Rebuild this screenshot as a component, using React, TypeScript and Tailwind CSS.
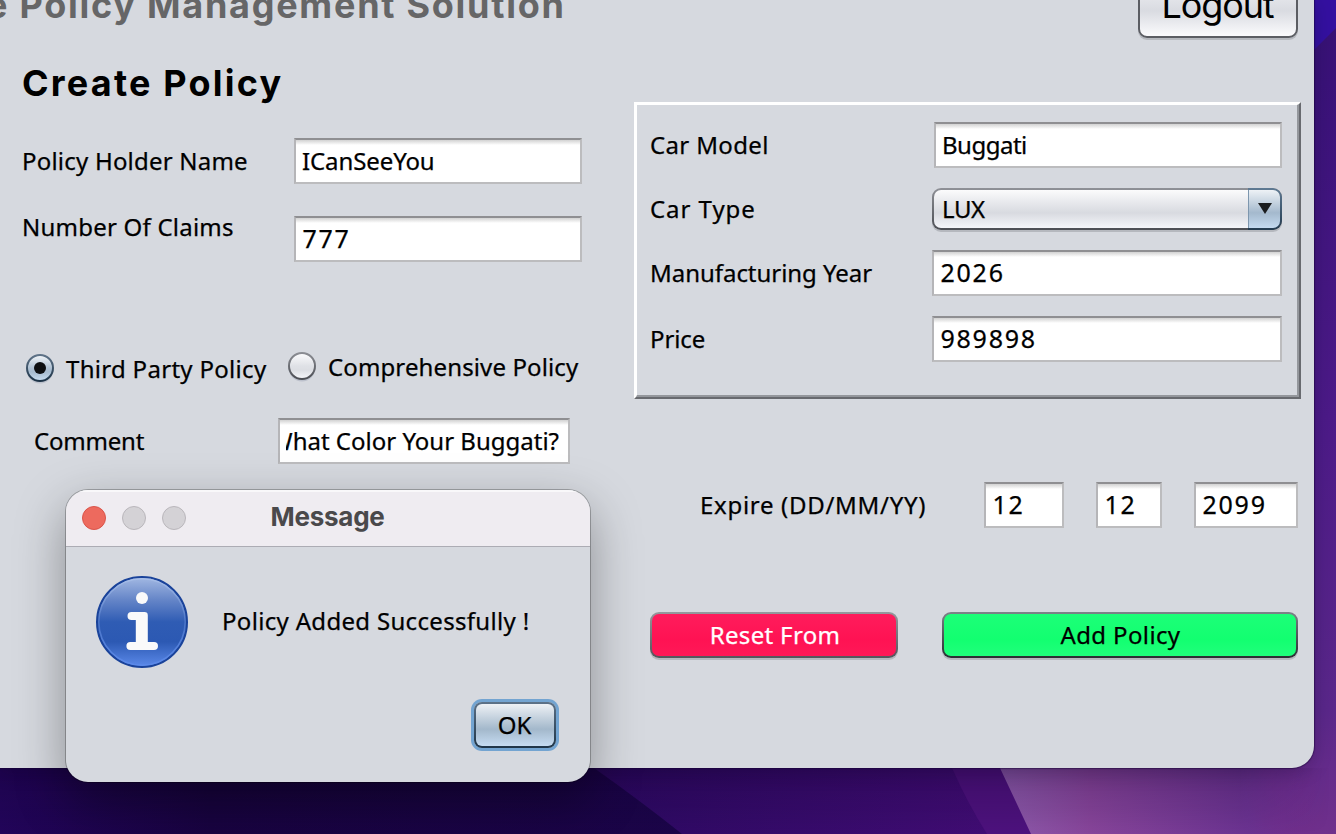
import type { ReactNode } from "react";

function Field({ className = "", children }: { className?: string; children: ReactNode }) {
  return (
    <div
      className={`flex h-[46px] shrink-0 items-center overflow-hidden border-2 border-t-[#8f8f92] border-r-[#bcbcbe] border-b-[#bcbcbe] border-l-[#b5b5b8] bg-white bg-linear-to-b from-[#d2d2d2] from-0% via-white via-[5px] to-white whitespace-nowrap ${className}`}
    >
      {children}
    </div>
  );
}

function NumberField({ className = "", children }: { className?: string; children: ReactNode }) {
  return <Field className={`pb-[2px] pl-[6.5px] text-[25px] tracking-[1.75px] ${className}`}>{children}</Field>;
}

function Radio({ id, checked = false }: { id: string; checked?: boolean }) {
  return (
    <svg width="28" height="32" viewBox="0 0 28 32" className="shrink-0">
      <defs>
        <linearGradient id={`${id}-fill`} x1="0" y1="0" x2="0" y2="1">
          <stop offset="0" stopColor={checked ? "#f4f7fa" : "#fdfdfe"} />
          <stop offset="0.5" stopColor={checked ? "#b0c2d4" : "#dfe1e6"} />
          <stop offset="0.65" stopColor={checked ? "#a6bbcf" : "#dcdee3"} />
          <stop offset="1" stopColor={checked ? "#c9dff3" : "#f7f8fb"} />
        </linearGradient>
        <linearGradient id={`${id}-line`} x1="0" y1="0" x2="0" y2="1">
          <stop offset="0" stopColor={checked ? "#5f7388" : "#8b8d93"} />
          <stop offset="1" stopColor={checked ? "#1c3347" : "#4d4f55"} />
        </linearGradient>
      </defs>
      <circle cx="14" cy="16" r="13.4" fill="#bcc1cc" />
      <circle cx="14" cy="14" r="13" fill={`url(#${id}-fill)`} stroke={`url(#${id}-line)`} strokeWidth="2" />
      {checked && <circle cx="14" cy="14" r="6" fill="#0d0f12" />}
    </svg>
  );
}

function InfoIcon() {
  return (
    <svg width="92" height="92" viewBox="0 0 92 92" className="shrink-0">
      <defs>
        <linearGradient id="info-fill" x1="0" y1="0" x2="0" y2="1">
          <stop offset="0" stopColor="#a3b9e3" />
          <stop offset="0.25" stopColor="#6686c8" />
          <stop offset="0.5" stopColor="#2f5cb4" />
          <stop offset="0.72" stopColor="#2c59b3" />
          <stop offset="1" stopColor="#5c8aea" />
        </linearGradient>
        <linearGradient id="info-rim" x1="0" y1="0" x2="0" y2="1">
          <stop offset="0" stopColor="#a9bfe8" />
          <stop offset="0.5" stopColor="#4a74c6" />
          <stop offset="1" stopColor="#5c8aea" />
        </linearGradient>
      </defs>
      <circle cx="46" cy="46" r="45" fill="url(#info-fill)" stroke="#1a439a" strokeWidth="2" />
      <circle cx="46" cy="46" r="43.2" fill="none" stroke="url(#info-rim)" strokeWidth="1.6" />
      <circle cx="46" cy="22" r="6" fill="#fafafa" />
      <path
        d="M35.5 36h13a3.3 3.3 0 0 1 3.3 3.3V66H58a4 4 0 0 1 0 8H34.4a4 4 0 0 1 0-8h5.4V44h-4.3a4 4 0 0 1 0-8z"
        fill="#fafafa"
      />
    </svg>
  );
}

function Wallpaper() {
  return (
    <svg width="1336" height="834" viewBox="0 0 1336 834" className="absolute inset-0">
      <defs>
        <linearGradient id="wp-right" x1="0" y1="0" x2="0" y2="1">
          <stop offset="0" stopColor="#361273" />
          <stop offset="0.1" stopColor="#3a1279" />
          <stop offset="0.5" stopColor="#4c1a88" />
          <stop offset="0.85" stopColor="#5a278a" />
          <stop offset="1" stopColor="#70308c" />
        </linearGradient>
        <linearGradient id="wp-left" x1="0" y1="0" x2="1" y2="0">
          <stop offset="0" stopColor="#22055a" />
          <stop offset="0.3" stopColor="#190442" />
          <stop offset="1" stopColor="#1b0549" />
        </linearGradient>
        <linearGradient id="wp-mid" x1="0" y1="0" x2="1" y2="0">
          <stop offset="0" stopColor="#2a0960" />
          <stop offset="1" stopColor="#430d76" />
        </linearGradient>
        <linearGradient id="wp-pink" x1="985" y1="0" x2="1336" y2="0" gradientUnits="userSpaceOnUse">
          <stop offset="0" stopColor="#8e5fae" />
          <stop offset="0.3" stopColor="#87459a" />
          <stop offset="0.75" stopColor="#6b3391" />
          <stop offset="0.95" stopColor="#702b8b" stopOpacity="0" />
        </linearGradient>
        <linearGradient id="wp-shade" x1="0" y1="768" x2="0" y2="834" gradientUnits="userSpaceOnUse">
          <stop offset="0" stopColor="#12002a" stopOpacity="0.25" />
          <stop offset="1" stopColor="#12002a" stopOpacity="0" />
        </linearGradient>
        <linearGradient id="wp-fade" x1="1240" y1="0" x2="1330" y2="0" gradientUnits="userSpaceOnUse">
          <stop offset="0" stopColor="white" />
          <stop offset="1" stopColor="black" />
        </linearGradient>
        <mask id="wp-shade-mask" maskUnits="userSpaceOnUse" x="0" y="768" width="1336" height="66">
          <rect y="768" width="1336" height="66" fill="url(#wp-fade)" />
        </mask>
      </defs>
      <rect width="1336" height="834" fill="url(#wp-right)" />
      <path d="M1300 0h36v28L1300 64z" fill="#3410a0" />
      <path d="M0 740h700v94H0z" fill="url(#wp-left)" />
      <path d="M560 740L594 768Q642 802 682 834H1040L990 740z" fill="url(#wp-mid)" />
      <path d="M942 740L952 768Q968 804 987 834H1040L990 740z" fill="#4d127d" />
      <path d="M985 740L1000 768L1031 834H1336V740z" fill="url(#wp-pink)" />
      <path d="M0 768h1336v66H0z" fill="url(#wp-shade)" mask="url(#wp-shade-mask)" />
    </svg>
  );
}

export default function App() {
  return (
    <div className="relative h-[834px] w-[1336px] overflow-hidden bg-[#22055a] font-['Noto_Sans','Liberation_Sans',sans-serif] text-[24px] leading-[32px] text-black [-webkit-text-stroke:0.25px_currentColor]">
      <Wallpaper />

      <main className="relative flex h-[768px] w-[1314px] flex-col overflow-hidden rounded-br-[22px] bg-[#d6d9df] shadow-[0_0_1px_1px_rgba(20,0,50,0.45),0_4px_18px_rgba(10,0,30,0.25)]">
        <header className="flex h-[40px] shrink-0 items-end justify-between pr-[16px]">
          <div className="ml-[-14px] flex h-[40px] items-end pb-[13px] font-['Inter',sans-serif] text-[36px] leading-[44px] font-bold tracking-[1.74px] whitespace-nowrap text-[#666667] [-webkit-text-stroke:0]">
            e Policy Management Solution
          </div>
          <button className="mb-[2px] flex h-[60px] w-[160px] shrink-0 items-end justify-center rounded-[9px] border-2 border-[#5b5d63] bg-linear-to-b from-[#f2f3f6] via-[#d9dbe1] via-55% to-[#fbfbfd] pr-px pb-[9px] font-['Inter',sans-serif] text-[36px] leading-[44px] tracking-[-1.1px] shadow-[0_2px_0_#b5b8be] [-webkit-text-stroke:0]">
            Logout
          </button>
        </header>

        <h1 className="flex h-[62px] shrink-0 items-center pt-[24px] pl-[22px] font-['Inter',sans-serif] text-[36px] leading-[44px] font-bold tracking-[2.2px] [-webkit-text-stroke:0]">
          Create Policy
        </h1>

        <div className="flex">
          <section className="flex w-[634px] shrink-0 flex-col pt-[36px] pl-[22px]">
            <div className="flex h-[46px] items-center">
              <label className="w-[272px] tracking-[0.21px]">Policy Holder Name</label>
              <Field className="w-[288px] pl-[6px] tracking-[-0.1px]">ICanSeeYou</Field>
            </div>
            <div className="mt-[32px] flex h-[46px] items-start">
              <label className="mt-[-5px] w-[272px] tracking-[0.22px]">Number Of Claims</label>
              <NumberField className="w-[288px]">777</NumberField>
            </div>
            <div className="mt-[90px] flex items-start pl-[4px]">
              <div className="mt-[2px] flex w-[262px] items-start gap-[12px]">
                <Radio id="third" checked />
                <span className="mt-[-1px] tracking-[0.3px] whitespace-nowrap">Third Party Policy</span>
              </div>
              <div className="flex items-start gap-[12px]">
                <Radio id="comp" />
                <span className="mt-[-1px] tracking-[0.12px] whitespace-nowrap">Comprehensive Policy</span>
              </div>
            </div>
            <div className="mt-[32px] flex h-[46px] items-center pl-[12px]">
              <label className="w-[244px] tracking-[-0.2px]">Comment</label>
              <Field className="w-[292px] px-[6px]">
                <div className="flex w-[273px] justify-end overflow-hidden">What Color Your Buggati?</div>
              </Field>
            </div>
          </section>

          <section className="flex w-[667px] shrink-0 flex-col">
            <div className="h-[297px] border-2 border-t-white border-r-[#686a6f] border-b-[#686a6f] border-l-white">
              <div className="flex h-full flex-col border-t border-r-2 border-b-2 border-l border-t-white border-r-[#94979c] border-b-[#94979c] border-l-white pt-[17px] pl-[13px]">
                <div className="flex h-[46px] items-center">
                  <label className="w-[284px] tracking-[0.35px]">Car Model</label>
                  <Field className="w-[348px] pl-[6px] tracking-[-0.5px]">Buggati</Field>
                </div>
                <div className="mt-[20px] flex h-[42px] items-center">
                  <label className="w-[282px] tracking-[0.95px]">Car Type</label>
                  <div className="flex h-[42px] w-[350px] overflow-hidden rounded-[9px] bg-linear-to-b from-[#8f9197] to-[#4c4e54] p-[2px] pr-0 shadow-[0_2px_0_#b5b8be]">
                    <div className="flex grow items-center rounded-l-[7px] bg-linear-to-b from-[#fbfbfc] via-[#d8dae0] via-60% to-[#f5f6fa] pl-[8px] tracking-[-0.4px]">
                      LUX
                    </div>
                    <div className="-my-[2px] w-[34px] rounded-r-[9px] bg-linear-to-b from-[#5f7a93] to-[#233b50] py-[2px] pr-[2px]">
                      <div className="flex h-full items-center justify-center rounded-r-[7px] border-l border-[#7d96ae] bg-linear-to-b from-[#eef2f6] via-[#a4b9cd] via-60% to-[#c4daf0]">
                        <svg width="14" height="11" viewBox="0 0 14 11" className="mb-px">
                          <path d="M0 0h14L7 11z" fill="#1a1c1e" />
                        </svg>
                      </div>
                    </div>
                  </div>
                </div>
                <div className="mt-[20px] flex h-[46px] items-center">
                  <label className="w-[282px] tracking-[-0.04px]">Manufacturing Year</label>
                  <NumberField className="w-[350px]">2026</NumberField>
                </div>
                <div className="mt-[20px] flex h-[46px] items-center">
                  <label className="w-[282px] tracking-[-0.1px]">Price</label>
                  <NumberField className="w-[350px]">989898</NumberField>
                </div>
              </div>
            </div>

            <div className="mt-[83px] flex h-[46px] items-center pl-[66px]">
              <label className="w-[284px] tracking-[0.7px]">Expire (DD/MM/YY)</label>
              <NumberField className="w-[80px]">12</NumberField>
              <NumberField className="ml-[32px] w-[66px]">12</NumberField>
              <NumberField className="ml-[32px] w-[104px]">2099</NumberField>
            </div>

            <div className="mt-[84px] flex gap-[44px] pl-[16px]">
              <button className="h-[46px] w-[248px] rounded-[9px] bg-linear-to-b from-[#96989d] to-[#54565c] p-[2px] shadow-[0_2px_0_#b5b8be]">
                <span className="flex h-full items-center justify-center rounded-[7px] bg-linear-to-b from-[#ff1c5c] via-[#ff1253] via-60% to-[#ff1857] pl-[2px] tracking-[0.35px] text-white">
                  Reset From
                </span>
              </button>
              <button className="h-[46px] w-[356px] rounded-[9px] bg-linear-to-b from-[#7e8389] to-[#2b2d33] p-[2px] shadow-[0_2px_0_#b5b8be]">
                <span className="flex h-full items-center justify-center rounded-[7px] bg-linear-to-b from-[#1cff78] via-[#12ff70] via-60% to-[#1fff7b] pl-px tracking-[0.36px]">
                  Add Policy
                </span>
              </button>
            </div>
          </section>
        </div>
      </main>

      <div
        role="dialog"
        className="absolute top-[490px] left-[66px] flex h-[292px] w-[524px] flex-col overflow-hidden rounded-[22px] bg-[#d6d9df] shadow-[0_0_0_1px_rgba(0,0,0,0.25),0_18px_50px_rgba(0,0,0,0.36)]"
      >
        <div className="flex h-[57px] shrink-0 items-center border-b border-[#acacb4] bg-[#efecf1] pl-[16px] shadow-[inset_0_2px_0_#f9f8fa]">
          <div className="flex w-[188.5px] gap-[16px]">
            <span className="size-[24px] rounded-full border border-[#d9544a] bg-[#ed6a5e]" />
            <span className="size-[24px] rounded-full border border-[#b9b6bb] bg-[#d4d2d6]" />
            <span className="size-[24px] rounded-full border border-[#b9b6bb] bg-[#d4d2d6]" />
          </div>
          <span className="pb-[2px] font-['Inter',sans-serif] text-[26px] font-bold tracking-[-0.25px] text-[#4a494b] [-webkit-text-stroke:0]">
            Message
          </span>
        </div>
        <div className="flex items-center gap-[34px] pt-[29px] pl-[30px]">
          <InfoIcon />
          <p className="pb-[2px] tracking-[0.32px]">Policy Added Successfully !</p>
        </div>
        <div className="mt-[34px] flex justify-end pr-[34px]">
          <button className="h-[46px] w-[82px] rounded-[8px] bg-linear-to-b from-[#5d7288] to-[#1f3548] p-[2px] shadow-[0_0_0_3px_#73a4d1]">
            <span className="flex h-full items-center justify-center rounded-[6px] bg-linear-to-b from-[#eef1f5] via-[#a3b8cb] via-60% to-[#c6dcf2] pr-px">
              OK
            </span>
          </button>
        </div>
      </div>
    </div>
  );
}
